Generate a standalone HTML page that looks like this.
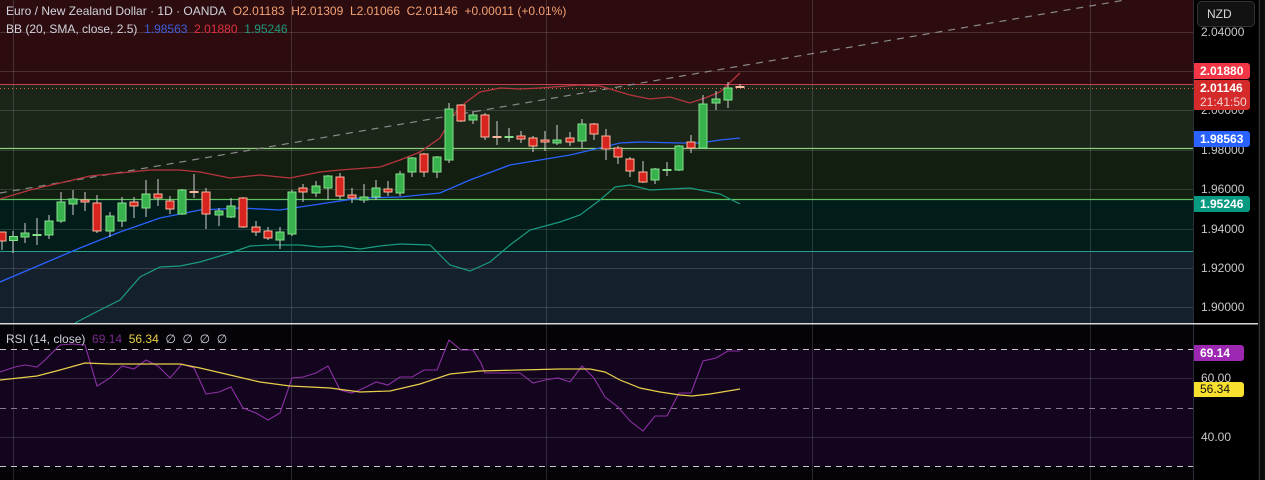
<!DOCTYPE html>
<html><head><meta charset="utf-8"><style>
html,body{margin:0;padding:0;background:#000;}
body{width:1265px;height:480px;overflow:hidden;position:relative;font-family:"Liberation Sans",sans-serif;}
.t{position:absolute;font-size:12px;white-space:nowrap;}
.lbl{position:absolute;left:1194px;width:56px;font-size:12px;font-weight:bold;color:#fff;padding-left:6px;box-sizing:border-box;border-radius:0 3px 3px 0;}
.ax{position:absolute;left:1201px;font-size:12px;color:#c8c8c8;}
</style></head><body>
<svg width="1265" height="480" style="position:absolute;left:0;top:0">
<rect x="0" y="0" width="1193" height="85" fill="#2d0c10"/>
<rect x="0" y="85" width="1193" height="63" fill="#1b2619"/>
<rect x="0" y="148" width="1193" height="51" fill="#121e10"/>
<rect x="0" y="199" width="1193" height="52" fill="#021c1a"/>
<rect x="0" y="251" width="1193" height="72" fill="#15202d"/>
<g stroke="#ffffff" stroke-opacity="0.14" stroke-width="1">
<line x1="0" y1="32.5" x2="1193" y2="32.5"/><line x1="0" y1="71.5" x2="1193" y2="71.5"/>
<line x1="0" y1="110.5" x2="1193" y2="110.5"/><line x1="0" y1="150.5" x2="1193" y2="150.5"/>
<line x1="0" y1="189.5" x2="1193" y2="189.5"/><line x1="0" y1="229.5" x2="1193" y2="229.5"/>
<line x1="0" y1="268.5" x2="1193" y2="268.5"/><line x1="0" y1="307.5" x2="1193" y2="307.5"/>
<line x1="13.5" y1="0" x2="13.5" y2="480"/><line x1="291.5" y1="0" x2="291.5" y2="480"/>
<line x1="546.5" y1="0" x2="546.5" y2="480"/><line x1="812.5" y1="0" x2="812.5" y2="480"/>
<line x1="1090.5" y1="0" x2="1090.5" y2="480"/>
</g>
<line x1="0" y1="84.5" x2="1193" y2="84.5" stroke="#c84050" stroke-width="1"/>
<line x1="0" y1="88.5" x2="1193" y2="88.5" stroke="#e06040" stroke-width="1" stroke-dasharray="1 3"/>
<line x1="0" y1="148.5" x2="1193" y2="148.5" stroke="#8fd07f" stroke-width="1.2"/>
<line x1="0" y1="199.5" x2="1193" y2="199.5" stroke="#5cc060" stroke-width="1.2"/>
<line x1="0" y1="251.5" x2="1193" y2="251.5" stroke="#2aa08a" stroke-width="1"/>
<line x1="0" y1="193" x2="1125" y2="0" stroke="#8a8a8a" stroke-width="1.2" stroke-dasharray="7 6"/>
<polyline fill="none" stroke="#b8343f" stroke-width="1.3" points="0,199 30,190 60,183 90,176 120,173 150,170 180,170 200,172 230,178 260,175 290,178 320,172 340,170 380,167 400,160 420,152 440,138 455,113 465,103 480,92 500,88 520,89 540,88 580,85 600,86 630,95 650,99 670,97 690,103 705,98 720,92 740,73"/>
<polyline fill="none" stroke="#2962ff" stroke-width="1.3" points="0,282 40,265 80,248 120,232 160,218 200,210 240,208 280,210 320,204 360,198 400,197 440,193 470,180 510,165 540,160 570,155 600,148 620,143 640,142 680,143 700,143 720,140 740,138"/>
<polyline fill="none" stroke="#1a9a80" stroke-width="1.2" points="75,323 100,310 120,300 140,277 160,267 180,266 200,262 230,253 250,246 270,245 300,245 320,247 340,246 360,249 380,246 400,244 430,245 450,265 470,271 490,262 510,245 530,230 560,222 580,215 600,200 615,187 630,185 650,190 690,188 720,194 740,204"/>
<g stroke="#d0d0d0" stroke-width="1">
<line x1="2" y1="232" x2="2" y2="250"/><line x1="13" y1="231" x2="13" y2="253"/><line x1="25" y1="223" x2="25" y2="243"/><line x1="37" y1="218" x2="37" y2="245"/><line x1="49" y1="215" x2="49" y2="239"/><line x1="61" y1="192" x2="61" y2="223"/><line x1="73" y1="190" x2="73" y2="215"/><line x1="85" y1="192" x2="85" y2="211"/><line x1="97" y1="195" x2="97" y2="233"/><line x1="110" y1="212" x2="110" y2="237"/><line x1="122" y1="197" x2="122" y2="227"/><line x1="134" y1="197" x2="134" y2="218"/><line x1="146" y1="180" x2="146" y2="217"/><line x1="158" y1="179" x2="158" y2="206"/><line x1="170" y1="196" x2="170" y2="214"/><line x1="182" y1="189" x2="182" y2="215"/><line x1="194" y1="174" x2="194" y2="198"/><line x1="206" y1="188" x2="206" y2="229"/><line x1="219" y1="208" x2="219" y2="226"/><line x1="231" y1="198" x2="231" y2="218"/><line x1="243" y1="197" x2="243" y2="228"/><line x1="256" y1="221" x2="256" y2="236"/><line x1="268" y1="227" x2="268" y2="240"/><line x1="280" y1="227" x2="280" y2="249"/><line x1="292" y1="190" x2="292" y2="236"/><line x1="303" y1="184" x2="303" y2="202"/><line x1="316" y1="181" x2="316" y2="197"/><line x1="328" y1="175" x2="328" y2="200"/><line x1="340" y1="173" x2="340" y2="199"/><line x1="352" y1="188" x2="352" y2="203"/><line x1="364" y1="184" x2="364" y2="203"/><line x1="376" y1="180" x2="376" y2="200"/><line x1="388" y1="181" x2="388" y2="196"/><line x1="400" y1="171" x2="400" y2="196"/><line x1="412" y1="157" x2="412" y2="177"/><line x1="424" y1="153" x2="424" y2="177"/><line x1="437" y1="156" x2="437" y2="178"/><line x1="449" y1="103" x2="449" y2="163"/><line x1="461" y1="104" x2="461" y2="122"/><line x1="473" y1="111" x2="473" y2="124"/><line x1="485" y1="113" x2="485" y2="140"/><line x1="497" y1="121" x2="497" y2="145"/><line x1="509" y1="128" x2="509" y2="142"/><line x1="521" y1="131" x2="521" y2="143"/><line x1="533" y1="136" x2="533" y2="152"/><line x1="545" y1="131" x2="545" y2="151"/><line x1="557" y1="125" x2="557" y2="145"/><line x1="570" y1="132" x2="570" y2="146"/><line x1="582" y1="119" x2="582" y2="148"/><line x1="594" y1="123" x2="594" y2="140"/><line x1="606" y1="129" x2="606" y2="160"/><line x1="618" y1="146" x2="618" y2="164"/><line x1="630" y1="157" x2="630" y2="177"/><line x1="643" y1="161" x2="643" y2="183"/><line x1="655" y1="168" x2="655" y2="184"/><line x1="667" y1="162" x2="667" y2="176"/><line x1="679" y1="145" x2="679" y2="171"/><line x1="691" y1="135" x2="691" y2="153"/><line x1="703" y1="95" x2="703" y2="148"/><line x1="716" y1="91" x2="716" y2="110"/><line x1="728" y1="82" x2="728" y2="108"/><line x1="740" y1="84" x2="740" y2="88"/>
</g>
<g fill="#37b24d" stroke="#86e08a" stroke-width="1">
<rect x="9.5" y="236.5" width="8" height="4"/><rect x="21" y="233" width="8" height="4"/><rect x="33" y="234.5" width="8" height="1"/><rect x="45" y="221" width="8" height="14"/><rect x="57" y="202" width="8" height="19"/><rect x="69" y="199" width="8" height="5"/><rect x="106" y="216" width="8" height="15"/><rect x="118" y="203" width="8" height="18"/><rect x="142" y="194" width="8" height="14"/><rect x="178" y="190" width="8" height="24"/><rect x="215" y="211" width="8" height="4"/><rect x="227" y="206" width="8" height="11"/><rect x="276" y="232" width="8" height="8"/><rect x="288" y="192" width="8" height="42"/><rect x="312" y="186" width="8" height="7"/><rect x="324" y="176" width="8" height="12"/><rect x="360" y="197" width="8" height="3"/><rect x="372" y="188" width="8" height="9"/><rect x="396" y="174" width="8" height="19"/><rect x="408" y="158" width="8" height="14"/><rect x="433" y="157" width="8" height="15"/><rect x="445" y="109" width="8" height="51"/><rect x="469" y="115" width="8" height="5"/><rect x="505" y="136.5" width="8" height="1"/><rect x="553" y="140" width="8" height="3"/><rect x="578" y="124" width="8" height="17"/><rect x="651" y="169" width="8" height="11"/><rect x="663" y="169.5" width="8" height="1"/><rect x="675" y="146" width="8" height="24"/><rect x="699" y="104" width="8" height="44"/><rect x="712" y="99" width="8" height="4"/><rect x="724" y="88" width="8" height="12"/>
</g>
<g fill="#d8241f" stroke="#f7b9a0" stroke-width="1">
<rect x="-2" y="232" width="8" height="9"/><rect x="81" y="200" width="8" height="2"/><rect x="93" y="203" width="8" height="28"/><rect x="130" y="202" width="8" height="4"/><rect x="154" y="194" width="8" height="4"/><rect x="166" y="201" width="8" height="8"/><rect x="190" y="191.5" width="8" height="1"/><rect x="202" y="192" width="8" height="22"/><rect x="239" y="198" width="8" height="29"/><rect x="252" y="227" width="8" height="5"/><rect x="264" y="231" width="8" height="7"/><rect x="299" y="188" width="8" height="4"/><rect x="336" y="177" width="8" height="19"/><rect x="348" y="195" width="8" height="3"/><rect x="384" y="189" width="8" height="3"/><rect x="420" y="154" width="8" height="18"/><rect x="457" y="105" width="8" height="16"/><rect x="481" y="115" width="8" height="22"/><rect x="493" y="136.5" width="8" height="1"/><rect x="517" y="136" width="8" height="3"/><rect x="529" y="138" width="8" height="8"/><rect x="541" y="140" width="8" height="2"/><rect x="566" y="138" width="8" height="4"/><rect x="590" y="124" width="8" height="10"/><rect x="602" y="136" width="8" height="13"/><rect x="614" y="148" width="8" height="9"/><rect x="626" y="159" width="8" height="12"/><rect x="639" y="172" width="8" height="10"/><rect x="687" y="142" width="8" height="6"/><rect x="736" y="86.5" width="8" height="1"/>
</g>
<rect x="0" y="323" width="1258" height="1.5" fill="#d8d8d8"/>
<rect x="0" y="325" width="1193" height="155" fill="#050308"/>
<rect x="0" y="349" width="1193" height="117" fill="#12051d"/>
<g stroke="#ffffff" stroke-opacity="0.14"><line x1="13.5" y1="325" x2="13.5" y2="480"/><line x1="291.5" y1="325" x2="291.5" y2="480"/><line x1="546.5" y1="325" x2="546.5" y2="480"/><line x1="812.5" y1="325" x2="812.5" y2="480"/><line x1="1090.5" y1="325" x2="1090.5" y2="480"/><line x1="0" y1="378.5" x2="1193" y2="378.5"/><line x1="0" y1="437.5" x2="1193" y2="437.5"/></g>
<line x1="0" y1="349.5" x2="1193" y2="349.5" stroke="#c8c8c8" stroke-dasharray="6 5"/>
<line x1="0" y1="408.5" x2="1193" y2="408.5" stroke="#8a7a90" stroke-dasharray="6 5"/>
<line x1="0" y1="466.5" x2="1193" y2="466.5" stroke="#c8c8c8" stroke-dasharray="6 5"/>
<polyline fill="none" stroke="#8e2fa6" stroke-width="1.1" points="0,372 15,367 25,365 37,367 45,360 60,345 72,344 85,345 97,386 110,378 122,366 134,369 146,360 158,366 170,378 182,364 194,368 206,394 219,392 231,387 243,408 256,413 268,420 280,413 292,378 303,377 316,373 328,366 340,390 352,393 364,388 376,382 388,385 400,377 412,377 424,370 437,370 449,340 461,350 473,350 481,363 485,373 520,373 533,383 545,380 558,378 570,382 582,366 594,378 605,397 618,407 630,421 643,431 655,416 667,416 679,393 691,393 703,361 716,358 728,351 740,351"/>
<polyline fill="none" stroke="#e8cf4a" stroke-width="1.2" points="0,380 37,376 60,370 85,363 110,364 140,364 180,364 200,368 230,375 260,382 290,386 330,388 360,392 390,391 420,384 450,374 480,371 520,370 560,369 590,369 605,372 620,380 640,388 660,392 680,395 692,396 710,394 740,389"/>
<rect x="1193" y="0" width="65" height="480" fill="#000"/>
<line x1="1193.5" y1="0" x2="1193.5" y2="480" stroke="#2a2e39"/>
<rect x="1258" y="0" width="7" height="480" fill="#0d0d0d"/>
<line x1="1259.5" y1="0" x2="1259.5" y2="480" stroke="#333"/>
<rect x="1193" y="323" width="65" height="1.5" fill="#d8d8d8"/>
<rect x="1197.5" y="1.5" width="57" height="25" rx="4" fill="#121212" stroke="#333"/>
</svg>
<div class="t" style="left:1207px;top:7px;color:#d8d8d8;font-size:12px">NZD</div>
<div class="ax" style="top:25px">2.04000</div>
<div class="ax" style="top:103px">2.00000</div>
<div class="ax" style="top:143px">1.98000</div>
<div class="ax" style="top:182px">1.96000</div>
<div class="ax" style="top:222px">1.94000</div>
<div class="ax" style="top:261px">1.92000</div>
<div class="ax" style="top:300px">1.90000</div>
<div class="ax" style="top:371px">60.00</div>
<div class="ax" style="top:430px">40.00</div>
<div class="lbl" style="top:63px;height:16px;line-height:16px;background:#f23645">2.01880</div>
<div class="lbl" style="top:80px;height:30px;line-height:14px;padding-top:1px;background:#d42a2a">2.01146<br><span style="font-weight:normal;color:#f4d0d0">21:41:50</span></div>
<div class="lbl" style="top:131px;height:16px;line-height:16px;background:#2962ff">1.98563</div>
<div class="lbl" style="top:196px;height:16px;line-height:16px;background:#089981">1.95246</div>
<div class="lbl" style="top:345px;height:16px;line-height:16px;background:#9c27b0;width:50px">69.14</div>
<div class="lbl" style="top:382px;height:15px;line-height:15px;background:#f7e02e;color:#111;width:50px;font-weight:normal">56.34</div>
<div class="t" style="left:6px;top:4px;color:#d1d4dc">Euro / New Zealand Dollar · 1D · OANDA&nbsp; <span style="color:#f5a274">O2.01183&nbsp; H2.01309&nbsp; L2.01066&nbsp; C2.01146&nbsp; +0.00011 (+0.01%)</span></div>
<div class="t" style="left:6px;top:22px;color:#d1d4dc">BB (20, SMA, close, 2.5)&nbsp; <span style="color:#3f5fd8">1.98563</span>&nbsp; <span style="color:#e03040">2.01880</span>&nbsp; <span style="color:#1f9a7c">1.95246</span></div>
<div class="t" style="left:6px;top:332px;color:#d1d4dc">RSI (14, close)&nbsp; <span style="color:#7a2a8c">69.14</span>&nbsp; <span style="color:#e8d04a">56.34</span>&nbsp; <span style="color:#d1d4dc">∅&nbsp; ∅&nbsp; ∅&nbsp; ∅</span></div>
</body></html>
